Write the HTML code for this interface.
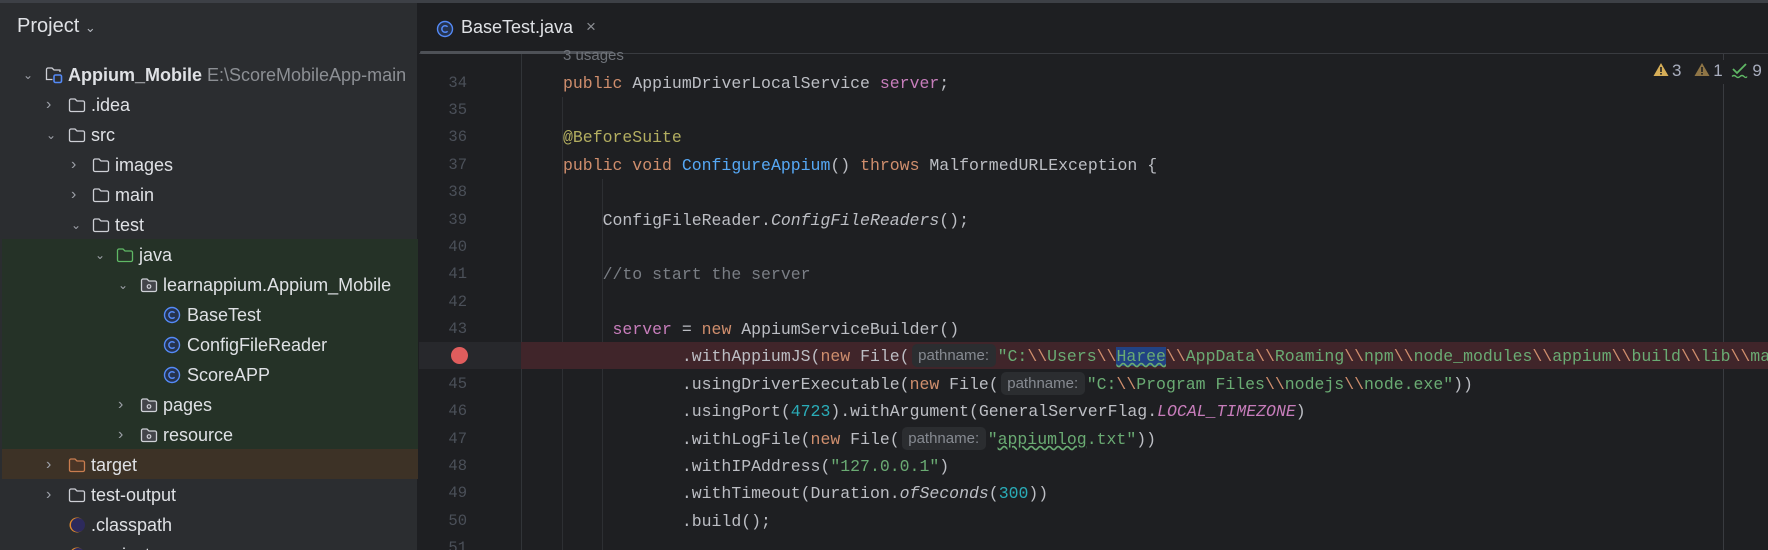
<!DOCTYPE html>
<html><head><meta charset="utf-8"><style>
*{margin:0;padding:0;box-sizing:border-box}
html{width:1768px;height:550px;overflow:hidden}
body{width:1768px;height:550px;background:#1e1f22;overflow:hidden;position:relative;font-family:"Liberation Sans",sans-serif}
.top{position:absolute;left:0;top:0;width:1768px;height:3px;background:#3d4046}
#left{position:absolute;left:0;top:3px;width:418px;height:547px;background:#2b2d30;border-right:1px solid #1e1f22}
.row{position:absolute;left:0;width:418px;height:30px;color:#dfe1e5;font-size:18px;line-height:30px;white-space:nowrap;overflow:hidden}
.row svg{position:absolute}
.ch{position:absolute;top:0;font-size:16px}
.t{position:absolute;top:0}
.code{position:absolute;left:563px;font-family:"Liberation Mono",monospace;font-size:16.5px;color:#bcbec4;white-space:pre;height:27px;line-height:27px}
.ln{position:absolute;width:60px;left:407px;text-align:right;font-family:"Liberation Mono",monospace;font-size:15.5px;color:#4b5059;height:27px;line-height:27px}
.k{color:#cf8e6d}.f{color:#56a8f5}.s{color:#6aab73}.n{color:#2aacb8}.p{color:#c77dbb}.a{color:#b3ae60}.c{color:#7a7e85}.i{font-style:italic}
.hint{display:inline-block;width:84px;height:23px;line-height:23px;vertical-align:1px;margin:0 2px 0 2px;background:#2b2d30;border-radius:5px;color:#868a91;font-family:"Liberation Sans",sans-serif;font-size:15px;text-align:center}
</style></head><body>
<div class="top"></div>
<div id="left">
 <div style="position:absolute;left:17px;top:12px;color:#dfe1e5;font-size:20px">Project <span style="font-size:13px;color:#b4b8bf">&#8964;</span></div>
 <div style="position:absolute;left:2px;top:236px;width:416px;height:210px;background:#253227"></div>
 <div style="position:absolute;left:2px;top:446px;width:416px;height:30px;background:#3d3226"></div>
</div>
<svg width="0" height="0" style="position:absolute"><defs>
<symbol id="fold" viewBox="0 0 18 16"><path d="M1.5 3.5a1.5 1.5 0 0 1 1.5-1.5h4l2 2h6a1.5 1.5 0 0 1 1.5 1.5v7.5a1.5 1.5 0 0 1-1.5 1.5h-12a1.5 1.5 0 0 1-1.5-1.5z" fill="none" stroke="#ced0d6" stroke-width="1.3"/></symbol>
<symbol id="pkg" viewBox="0 0 18 16"><path d="M1.5 3.5a1.5 1.5 0 0 1 1.5-1.5h4l2 2h6a1.5 1.5 0 0 1 1.5 1.5v7.5a1.5 1.5 0 0 1-1.5 1.5h-12a1.5 1.5 0 0 1-1.5-1.5z" fill="#43454a" stroke="#ced0d6" stroke-width="1.3"/><circle cx="9" cy="9.5" r="1.8" fill="none" stroke="#ced0d6" stroke-width="1.2"/></symbol>
<symbol id="cls" viewBox="0 0 18 18"><circle cx="9" cy="9" r="7.5" fill="#25324d" stroke="#548af7" stroke-width="1.4"/><path d="M11.6 6.8a3.3 3.3 0 1 0 0 4.4" fill="none" stroke="#548af7" stroke-width="1.5"/></symbol>
</defs></svg>
<div class="row" style="top:60px"><span class="ch" style="left:23px;color:#9da0a8;font-size:12px">&#8964;</span><svg style="left:45px;top:6px" width="18" height="18" viewBox="0 0 18 18"><path d="M1.5 3.5a1.5 1.5 0 0 1 1.5-1.5h4l2 2h6v2" fill="none" stroke="#ced0d6" stroke-width="1.3"/><path d="M1.5 3.5v10h6" fill="none" stroke="#ced0d6" stroke-width="1.3"/><rect x="9" y="9" width="7.5" height="7.5" rx="1.5" fill="#2b2d30" stroke="#548af7" stroke-width="1.6"/></svg><span class="t" style="left:68px;font-weight:bold">Appium_Mobile <span style="font-weight:normal;color:#8c8f94">E:\ScoreMobileApp-main</span></span></div>
<div class="row" style="top:90px"><span class="ch" style="left:46px;color:#9da0a8">&#8250;</span><svg style="left:68px;top:7px" width="18" height="16"><use href="#fold"/></svg><span class="t" style="left:91px">.idea</span></div>
<div class="row" style="top:120px"><span class="ch" style="left:46px;color:#9da0a8;font-size:12px">&#8964;</span><svg style="left:68px;top:7px" width="18" height="16"><use href="#fold"/></svg><span class="t" style="left:91px">src</span></div>
<div class="row" style="top:150px"><span class="ch" style="left:71px;color:#9da0a8">&#8250;</span><svg style="left:92px;top:7px" width="18" height="16"><use href="#fold"/></svg><span class="t" style="left:115px">images</span></div>
<div class="row" style="top:180px"><span class="ch" style="left:71px;color:#9da0a8">&#8250;</span><svg style="left:92px;top:7px" width="18" height="16"><use href="#fold"/></svg><span class="t" style="left:115px">main</span></div>
<div class="row" style="top:210px"><span class="ch" style="left:71px;color:#9da0a8;font-size:12px">&#8964;</span><svg style="left:92px;top:7px" width="18" height="16"><use href="#fold"/></svg><span class="t" style="left:115px">test</span></div>
<div class="row" style="top:240px"><span class="ch" style="left:95px;color:#9da0a8;font-size:12px">&#8964;</span><svg style="left:116px;top:7px" width="18" height="16" viewBox="0 0 18 16"><path d="M1.5 3.5a1.5 1.5 0 0 1 1.5-1.5h4l2 2h6a1.5 1.5 0 0 1 1.5 1.5v7.5a1.5 1.5 0 0 1-1.5 1.5h-12a1.5 1.5 0 0 1-1.5-1.5z" fill="none" stroke="#5fb865" stroke-width="1.3"/></svg><span class="t" style="left:139px">java</span></div>
<div class="row" style="top:270px"><span class="ch" style="left:118px;color:#9da0a8;font-size:12px">&#8964;</span><svg style="left:140px;top:7px" width="18" height="16"><use href="#pkg"/></svg><span class="t" style="left:163px">learnappium.Appium_Mobile</span></div>
<div class="row" style="top:300px"><svg style="left:163px;top:6px" width="18" height="18"><use href="#cls"/></svg><span class="t" style="left:187px">BaseTest</span></div>
<div class="row" style="top:330px"><svg style="left:163px;top:6px" width="18" height="18"><use href="#cls"/></svg><span class="t" style="left:187px">ConfigFileReader</span></div>
<div class="row" style="top:360px"><svg style="left:163px;top:6px" width="18" height="18"><use href="#cls"/></svg><span class="t" style="left:187px">ScoreAPP</span></div>
<div class="row" style="top:390px"><span class="ch" style="left:118px;color:#9da0a8">&#8250;</span><svg style="left:140px;top:7px" width="18" height="16"><use href="#pkg"/></svg><span class="t" style="left:163px">pages</span></div>
<div class="row" style="top:420px"><span class="ch" style="left:118px;color:#9da0a8">&#8250;</span><svg style="left:140px;top:7px" width="18" height="16"><use href="#pkg"/></svg><span class="t" style="left:163px">resource</span></div>
<div class="row" style="top:450px"><span class="ch" style="left:46px;color:#9da0a8">&#8250;</span><svg style="left:68px;top:7px" width="18" height="16" viewBox="0 0 18 16"><path d="M1.5 3.5a1.5 1.5 0 0 1 1.5-1.5h4l2 2h6a1.5 1.5 0 0 1 1.5 1.5v7.5a1.5 1.5 0 0 1-1.5 1.5h-12a1.5 1.5 0 0 1-1.5-1.5z" fill="#4a3526" stroke="#c97d4f" stroke-width="1.3"/></svg><span class="t" style="left:91px">target</span></div>
<div class="row" style="top:480px"><span class="ch" style="left:46px;color:#9da0a8">&#8250;</span><svg style="left:68px;top:7px" width="18" height="16"><use href="#fold"/></svg><span class="t" style="left:91px">test-output</span></div>
<div class="row" style="top:510px"><svg style="left:68px;top:6px" width="18" height="18"><circle cx="9" cy="9" r="7.5" fill="#e08a2e"/><circle cx="10" cy="9" r="7" fill="#2d2a5c"/></svg><span class="t" style="left:91px">.classpath</span></div>
<div class="row" style="top:540px;height:10px"><svg style="left:68px;top:6px" width="18" height="18"><circle cx="9" cy="9" r="7.5" fill="#e08a2e"/><circle cx="10" cy="9" r="7" fill="#2d2a5c"/></svg><span class="t" style="left:91px">.project</span></div>

<div style="position:absolute;left:419px;top:53px;width:1349px;height:1px;background:#393b40"></div>
<div style="position:absolute;left:420px;top:51px;width:193px;height:3px;background:#4e5157;border-radius:2px"></div>
<svg style="position:absolute;left:436px;top:20px" width="18" height="18"><use href="#cls"/></svg>
<div style="position:absolute;left:461px;top:17px;font-size:18px;color:#dfe1e5">BaseTest.java</div>
<div style="position:absolute;left:586px;top:17px;font-size:17px;color:#8c8f94">×</div>
<div style="position:absolute;left:521px;top:54px;width:1px;height:496px;background:#313438"></div>
<div style="position:absolute;left:562px;top:97px;width:1px;height:453px;background:#2d2f33"></div>
<div style="position:absolute;left:602px;top:179px;width:1px;height:371px;background:#2d2f33"></div>
<div style="position:absolute;left:1723px;top:54px;width:1px;height:6px;background:#393b40"></div>
<div style="position:absolute;left:1723px;top:84px;width:1px;height:466px;background:#393b40"></div>
<div style="position:absolute;left:419px;top:342px;width:102px;height:27px;background:#27282c"></div>
<div style="position:absolute;left:521px;top:342px;width:1247px;height:27px;background:#40252a"></div>
<div style="position:absolute;left:451px;top:347px;width:17px;height:17px;border-radius:50%;background:#e05d5d"></div>
<div class="code c" style="top:42px;font-family:'Liberation Sans',sans-serif;font-size:15px;color:#6f737a">3 usages</div>

<div class="ln" style="top:70px">34</div><div class="code" style="top:70px"><span class="k">public</span> AppiumDriverLocalService <span class="p">server</span>;</div>
<div class="ln" style="top:97px">35</div>
<div class="ln" style="top:124px">36</div><div class="code a" style="top:124px">@BeforeSuite</div>
<div class="ln" style="top:152px">37</div><div class="code" style="top:152px"><span class="k">public void</span> <span class="f">ConfigureAppium</span>() <span class="k">throws</span> MalformedURLException {</div>
<div class="ln" style="top:179px">38</div>
<div class="ln" style="top:207px">39</div><div class="code" style="top:207px">    ConfigFileReader.<span class="i">ConfigFileReaders</span>();</div>
<div class="ln" style="top:234px">40</div>
<div class="ln" style="top:261px">41</div><div class="code c" style="top:261px">    //to start the server</div>
<div class="ln" style="top:289px">42</div>
<div class="ln" style="top:316px">43</div><div class="code" style="top:316px">     <span class="p">server</span> = <span class="k">new</span> AppiumServiceBuilder()</div>
<div class="code" style="top:343px">            .withAppiumJS(<span class="k">new</span> File(<span class="hint">pathname:</span><span class="s">"C:<span class="k">\\</span>Users<span class="k">\\</span><span style="background:#214283;text-decoration:underline wavy #6aab73">Haree</span><span class="k">\\</span>AppData<span class="k">\\</span>Roaming<span class="k">\\</span>npm<span class="k">\\</span>node_modules<span class="k">\\</span>appium<span class="k">\\</span>build<span class="k">\\</span>lib<span class="k">\\</span>main.js"</span>))</div>
<div class="ln" style="top:371px">45</div><div class="code" style="top:371px">            .usingDriverExecutable(<span class="k">new</span> File(<span class="hint">pathname:</span><span class="s">"C:<span class="k">\\</span>Program Files<span class="k">\\</span>nodejs<span class="k">\\</span>node.exe"</span>))</div>
<div class="ln" style="top:398px">46</div><div class="code" style="top:398px">            .usingPort(<span class="n">4723</span>).withArgument(GeneralServerFlag.<span class="p i">LOCAL_TIMEZONE</span>)</div>
<div class="ln" style="top:426px">47</div><div class="code" style="top:426px">            .withLogFile(<span class="k">new</span> File(<span class="hint">pathname:</span><span class="s">"<span style="text-decoration:underline wavy #6aab73">appiumlog</span>.txt"</span>))</div>
<div class="ln" style="top:453px">48</div><div class="code" style="top:453px">            .withIPAddress(<span class="s">"127.0.0.1"</span>)</div>
<div class="ln" style="top:480px">49</div><div class="code" style="top:480px">            .withTimeout(Duration.<span class="i">ofSeconds</span>(<span class="n">300</span>))</div>
<div class="ln" style="top:508px">50</div><div class="code" style="top:508px">            .build();</div>
<div class="ln" style="top:535px;height:15px;overflow:hidden">51</div>
<div style="position:absolute;left:1653px;top:60px;height:22px;font-size:17px;color:#a8adbd;white-space:nowrap;line-height:22px">
<svg width="16" height="15" style="vertical-align:-1px"><path d="M8 1L15.5 14H0.5Z" fill="#d6ae58"/><rect x="7.2" y="5" width="1.6" height="5" fill="#1e1f22"/><rect x="7.2" y="11" width="1.6" height="1.6" fill="#1e1f22"/></svg><span style="margin-left:3px">3</span>
<svg width="16" height="15" style="vertical-align:-1px;margin-left:8px"><path d="M8 1L15.5 14H0.5Z" fill="#8f7546"/><rect x="7.2" y="5" width="1.6" height="5" fill="#1e1f22"/><rect x="7.2" y="11" width="1.6" height="1.6" fill="#1e1f22"/></svg><span style="margin-left:3px">1</span>
<svg width="17" height="17" style="vertical-align:-3px;margin-left:4px"><path d="M2 7l4 4 9-9" fill="none" stroke="#5fb865" stroke-width="1.8"/><path d="M1 14.5q2-2 4 0t4 0 4 0 3 0" fill="none" stroke="#5fb865" stroke-width="1.3"/></svg><span style="margin-left:4px">9</span></div>
</body></html>
